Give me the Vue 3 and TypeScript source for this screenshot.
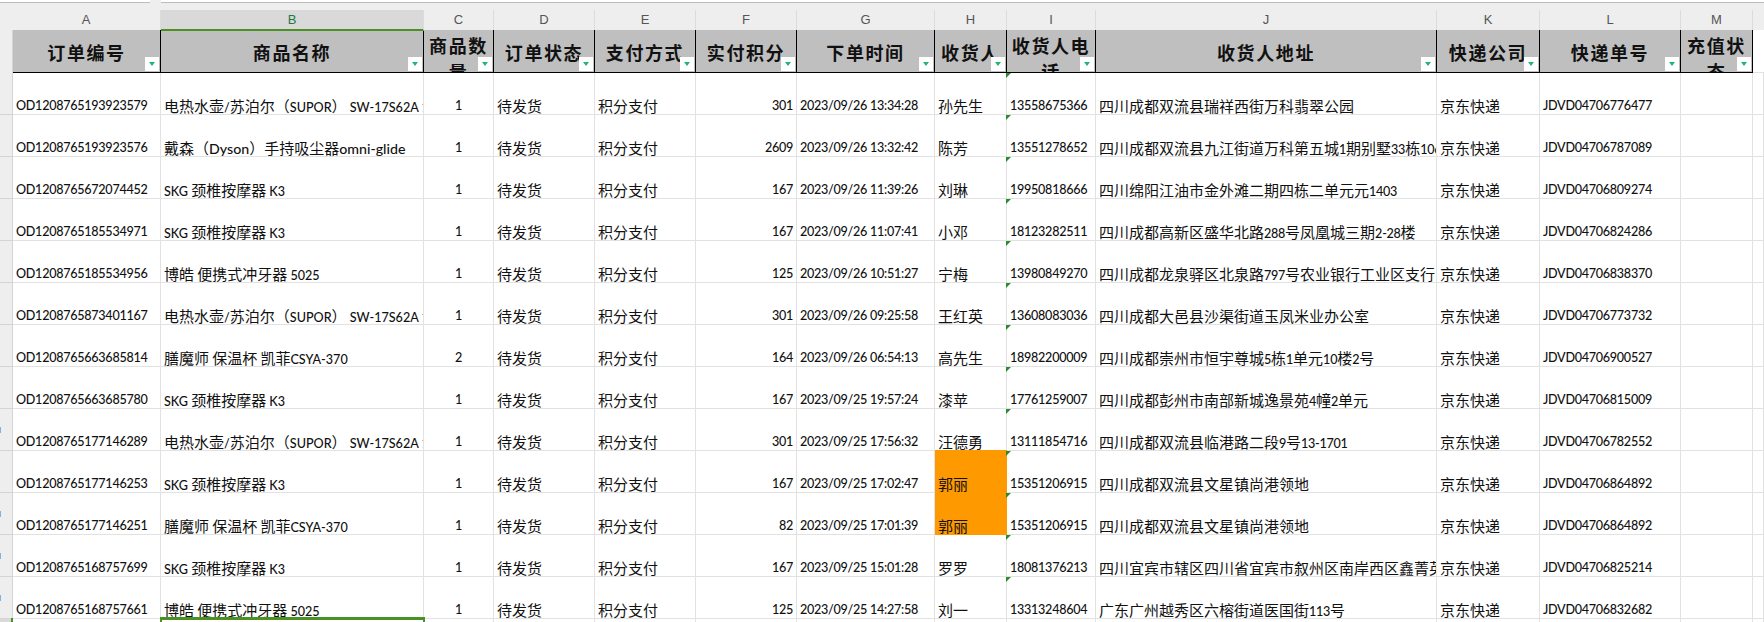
<script setup lang="ts">
interface Row {
  id: string
  product: string
  qty: number
  points: number
  time: string
  name: string
  phone: string
  addr: string
  waybill: string
  mark?: boolean
}

const columns = [
  { letter: 'A', title: '订单编号', width: 149, body: 148 },
  { letter: 'B', title: '商品名称', width: 263, body: 263 },
  { letter: 'C', title: '商品数量', width: 70, body: 70 },
  { letter: 'D', title: '订单状态', width: 101, body: 101 },
  { letter: 'E', title: '支付方式', width: 101, body: 101 },
  { letter: 'F', title: '实付积分', width: 101, body: 101 },
  { letter: 'G', title: '下单时间', width: 138, body: 138 },
  { letter: 'H', title: '收货人', width: 72, body: 72 },
  { letter: 'I', title: '收货人电话', width: 89, body: 89 },
  { letter: 'J', title: '收货人地址', width: 341, body: 341 },
  { letter: 'K', title: '快递公司', width: 103, body: 103 },
  { letter: 'L', title: '快递单号', width: 141, body: 141 },
  { letter: 'M', title: '充值状态', width: 72, body: 72 }
]

const kettle = '电热水壶/苏泊尔（SUPOR） SW-17S62A 1.7L'
const skg = 'SKG 颈椎按摩器 K3'
const cup = '膳魔师 保温杯 凯菲CSYA-370'
const floss = '博皓 便携式冲牙器 5025'

const rows: Row[] = [
  { id: 'OD1208765193923579', product: kettle, qty: 1, points: 301, time: '2023/09/26 13:34:28', name: '孙先生', phone: '13558675366', addr: '四川成都双流县瑞祥西街万科翡翠公园', waybill: 'JDVD04706776477' },
  { id: 'OD1208765193923576', product: '戴森（Dyson）手持吸尘器omni-glide', qty: 1, points: 2609, time: '2023/09/26 13:32:42', name: '陈芳', phone: '13551278652', addr: '四川成都双流县九江街道万科第五城1期别墅33栋1062号', waybill: 'JDVD04706787089' },
  { id: 'OD1208765672074452', product: skg, qty: 1, points: 167, time: '2023/09/26 11:39:26', name: '刘琳', phone: '19950818666', addr: '四川绵阳江油市金外滩二期四栋二单元元1403', waybill: 'JDVD04706809274' },
  { id: 'OD1208765185534971', product: skg, qty: 1, points: 167, time: '2023/09/26 11:07:41', name: '小邓', phone: '18123282511', addr: '四川成都高新区盛华北路288号凤凰城三期2-28楼', waybill: 'JDVD04706824286' },
  { id: 'OD1208765185534956', product: floss, qty: 1, points: 125, time: '2023/09/26 10:51:27', name: '宁梅', phone: '13980849270', addr: '四川成都龙泉驿区北泉路797号农业银行工业区支行', waybill: 'JDVD04706838370' },
  { id: 'OD1208765873401167', product: kettle, qty: 1, points: 301, time: '2023/09/26 09:25:58', name: '王红英', phone: '13608083036', addr: '四川成都大邑县沙渠街道玉凤米业办公室', waybill: 'JDVD04706773732' },
  { id: 'OD1208765663685814', product: cup, qty: 2, points: 164, time: '2023/09/26 06:54:13', name: '高先生', phone: '18982200009', addr: '四川成都崇州市恒宇尊城5栋1单元10楼2号', waybill: 'JDVD04706900527' },
  { id: 'OD1208765663685780', product: skg, qty: 1, points: 167, time: '2023/09/25 19:57:24', name: '漆苹', phone: '17761259007', addr: '四川成都彭州市南部新城逸景苑4幢2单元', waybill: 'JDVD04706815009' },
  { id: 'OD1208765177146289', product: kettle, qty: 1, points: 301, time: '2023/09/25 17:56:32', name: '汪德勇', phone: '13111854716', addr: '四川成都双流县临港路二段9号13-1701', waybill: 'JDVD04706782552' },
  { id: 'OD1208765177146253', product: skg, qty: 1, points: 167, time: '2023/09/25 17:02:47', name: '郭丽', phone: '15351206915', addr: '四川成都双流县文星镇尚港领地', waybill: 'JDVD04706864892', mark: true },
  { id: 'OD1208765177146251', product: cup, qty: 1, points: 82, time: '2023/09/25 17:01:39', name: '郭丽', phone: '15351206915', addr: '四川成都双流县文星镇尚港领地', waybill: 'JDVD04706864892', mark: true },
  { id: 'OD1208765168757699', product: skg, qty: 1, points: 167, time: '2023/09/25 15:01:28', name: '罗罗', phone: '18081376213', addr: '四川宜宾市辖区四川省宜宾市叙州区南岸西区鑫菁英小区', waybill: 'JDVD04706825214' },
  { id: 'OD1208765168757661', product: floss, qty: 1, points: 125, time: '2023/09/25 14:27:58', name: '刘一', phone: '13313248604', addr: '广东广州越秀区六榕街道医国街113号', waybill: 'JDVD04706832682' }
]

const tickRows = [8, 10, 11, 12]

function segments(text: string): { text: string; latin: boolean; lower: boolean }[] {
  return text
    .split(/([\x00-\x7f]+)/)
    .filter((part) => part.length > 0)
    .map((part) => ({
      text: part,
      latin: /^[\x00-\x7f]+$/.test(part),
      lower: /[a-z]/.test(part)
    }))
}
</script>

<template>
  <div class="sheet">
    <div class="topbar"><span class="tab-a"></span><span class="tab-b"></span></div>
    <div class="letters">
      <div class="corner"></div>
      <div
        v-for="c in columns"
        :key="c.letter"
        class="letter"
        :class="{ active: c.letter === 'B' }"
        :style="{ width: c.width + 'px' }"
      >{{ c.letter }}</div>
    </div>
    <div class="body">
      <div class="gutter">
        <div class="gutter-head"></div>
        <div v-for="(r, i) in rows" :key="r.id" class="gutter-row">
          <span v-if="tickRows.includes(i)" class="tick"></span>
        </div>
        <div class="gutter-selected"></div>
      </div>
      <table class="grid">
        <colgroup>
          <col v-for="c in columns" :key="c.letter" :style="{ width: c.body + 'px' }" />
          <col class="col-rest" />
        </colgroup>
        <thead>
          <tr>
            <th v-for="c in columns" :key="c.letter">
              <div class="head-inner">
                <span class="head-text">{{ c.title }}</span>
                <span class="filter"><i></i></span>
              </div>
            </th>
            <th class="rest"></th>
          </tr>
        </thead>
        <tbody>
          <tr v-for="r in rows" :key="r.id">
            <td><div class="cell num">{{ r.id }}</div></td>
            <td>
              <div class="cell">
                <span
                  v-for="(s, i) in segments(r.product)"
                  :key="i"
                  :class="{ latin: s.latin, lower: s.lower }"
                >{{ s.text }}</span>
              </div>
            </td>
            <td><div class="cell num center">{{ r.qty }}</div></td>
            <td><div class="cell">待发货</div></td>
            <td><div class="cell">积分支付</div></td>
            <td><div class="cell num right">{{ r.points }}</div></td>
            <td><div class="cell num">{{ r.time }}</div></td>
            <td :class="{ marked: r.mark }"><div class="cell">{{ r.name }}</div></td>
            <td class="flagged"><div class="cell num">{{ r.phone }}</div></td>
            <td>
              <div class="cell addr">
                <span
                  v-for="(s, i) in segments(r.addr)"
                  :key="i"
                  :class="{ latin: s.latin }"
                >{{ s.text }}</span>
              </div>
            </td>
            <td><div class="cell">京东快递</div></td>
            <td><div class="cell num">{{ r.waybill }}</div></td>
            <td></td>
            <td></td>
          </tr>
          <tr>
            <td v-for="n in 14" :key="n"></td>
          </tr>
        </tbody>
      </table>
    </div>
    <div class="selection"></div>
  </div>
</template>

<style>
html, body {
  margin: 0;
  background: #fff;
}
</style>

<style scoped>
.sheet {
  position: relative;
  width: 1764px;
  height: 622px;
  overflow: hidden;
  background: #fff;
  font-family: "Lato", "Noto Sans CJK SC", sans-serif;
  color: #111;
}
.topbar {
  height: 10px;
  background: #eeeeee;
  position: relative;
}
.tab-a, .tab-b {
  position: absolute;
  top: 0;
  height: 2px;
  background: #fff;
  border-bottom: 1px solid #bdbdbd;
}
.tab-a { left: 0; width: 150px; }
.tab-b { left: 161px; right: 0; }
.letters {
  display: flex;
  align-items: flex-start;
  height: 20px;
  background: #eeeeee;
}
.corner { width: 12px; flex: none; }
.letter {
  flex: none;
  height: 20px;
  box-sizing: border-box;
  border-right: 1px solid #dcdcdc;
  text-align: center;
  font: 13px/20px "Liberation Sans", sans-serif;
  color: #555;
}
.letter.active {
  height: 21px;
  position: relative;
  z-index: 1;
  background: #d9d9d9;
  color: #1d7a45;
  border-bottom: 2px solid #4a9023;
}
.body {
  display: flex;
  align-items: flex-start;
}
.gutter {
  width: 13px;
  flex: none;
  box-sizing: border-box;
  background: #eeeeee;
  border-right: 1px solid #d4d4d4;
}
.gutter-head { height: 43px; }
.gutter-row {
  height: 42px;
  box-sizing: border-box;
  border-bottom: 1px solid #d4d4d4;
  display: flex;
  align-items: center;
}
.tick {
  width: 1px;
  height: 6px;
  background: #7db4e6;
}
.gutter-selected {
  height: 4px;
  background: #d9d9d9;
}
.grid {
  table-layout: fixed;
  border-collapse: separate;
  border-spacing: 0;
  width: 1751px;
}
.col-rest { width: 11px; }
th {
  padding: 0;
  height: 43px;
  box-sizing: border-box;
  background: #bfbfbf;
  border-right: 1px solid #000;
  border-bottom: 1px solid #000;
}
th.rest {
  background: #fff;
  border-right: 0;
  border-bottom: 1px solid #e2e2e2;
}
.head-inner {
  position: relative;
  height: 42px;
  overflow: hidden;
  display: flex;
  justify-content: center;
}
.head-text {
  font-family: "Noto Sans CJK SC", sans-serif;
  font-weight: 700;
  font-size: 18px;
  letter-spacing: 1.6px;
  line-height: 26px;
  padding-top: 9px;
  color: #111;
  word-break: break-all;
  text-align: center;
}
th:nth-child(3) .head-text,
th:nth-child(9) .head-text,
th:nth-child(13) .head-text {
  padding-top: 2px;
}
.filter {
  position: absolute;
  right: 1px;
  bottom: 1px;
  width: 14px;
  height: 14px;
  background: #fff;
  display: flex;
  align-items: center;
  justify-content: center;
}
.filter i {
  width: 0;
  height: 0;
  border-left: 3px solid transparent;
  border-right: 3px solid transparent;
  border-top: 4px solid #22b573;
}
td {
  padding: 0;
  height: 42px;
  box-sizing: border-box;
  border-right: 1px solid #e2e2e2;
  border-bottom: 1px solid #e2e2e2;
  vertical-align: bottom;
  position: relative;
}
.cell {
  font-family: "Noto Sans CJK SC", sans-serif;
  font-size: 15px;
  line-height: 16px;
  height: 18px;
  box-sizing: border-box;
  padding: 2px 3px 0;
  white-space: nowrap;
  overflow-x: clip;
  font-weight: 400;
}
.latin {
  font-family: "Lato", sans-serif;
  font-size: 12.6px;
  font-weight: 500;
}
.latin.lower {
  font-size: 14.2px;
}
.addr .latin {
  letter-spacing: -0.28px;
}
.num {
  font-family: "Lato", sans-serif;
  font-size: 12.6px;
  font-weight: 500;
  letter-spacing: -0.28px;
}
.center { text-align: center; }
.right { text-align: right; }
.marked {
  background: #ff9900;
  border-color: #ff9900;
  box-shadow: 0 -1px 0 #ff9900;
}
.flagged::before {
  content: "";
  position: absolute;
  left: -1px;
  top: 0;
  width: 0;
  height: 0;
  border-top: 5px solid #2a8c2a;
  border-right: 5px solid transparent;
}
.selection {
  position: absolute;
  left: 160px;
  top: 617px;
  width: 265px;
  height: 10px;
  box-sizing: border-box;
  border: 2px solid #4a9023;
  border-top-width: 3px;
}
.selection::before {
  content: "";
  position: absolute;
  left: -151px;
  top: -2px;
  width: 2px;
  height: 6px;
  background: #4a9023;
}
</style>
